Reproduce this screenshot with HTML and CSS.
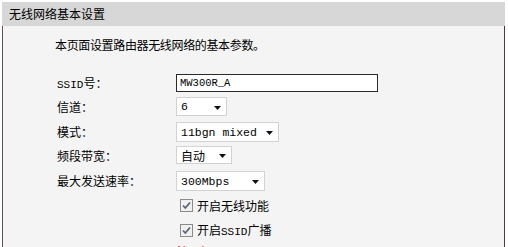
FILE: index.html
```html
<!DOCTYPE html>
<html lang="zh-CN">
<head>
  <meta charset="UTF-8">
  <title>无线网络基本设置</title>
  <link rel="stylesheet" href="styles.css">
</head>
<body>

  <!-- Wireless basic settings panel -->
  <div class="panel">
    <div class="panel-title">无线网络基本设置</div>
    <div class="panel-body">
      <p class="intro">本页面设置路由器无线网络的基本参数。</p>

      <div class="form">
        <div class="row row-ssid">
          <span class="label label-input"><span class="latin">SSID</span>号：</span>
          <input class="text" type="text" value="MW300R_A">
        </div>
        <div class="row row-channel">
          <span class="label">信道：</span>
          <div class="select sel-channel"><span>6</span><svg class="arrow" width="7" height="4" viewBox="0 0 7 4"><path d="M0 0H7L3.5 4Z" fill="#111"/></svg></div>
        </div>
        <div class="row row-mode">
          <span class="label">模式：</span>
          <div class="select sel-mode"><span>11bgn mixed</span><svg class="arrow" width="7" height="4" viewBox="0 0 7 4"><path d="M0 0H7L3.5 4Z" fill="#111"/></svg></div>
        </div>
        <div class="row row-band">
          <span class="label">频段带宽：</span>
          <div class="select sel-band"><span class="cjk">自动</span><svg class="arrow" width="7" height="4" viewBox="0 0 7 4"><path d="M0 0H7L3.5 4Z" fill="#111"/></svg></div>
        </div>
        <div class="row row-rate">
          <span class="label">最大发送速率：</span>
          <div class="select sel-rate"><span>300Mbps</span><svg class="arrow" width="7" height="4" viewBox="0 0 7 4"><path d="M0 0H7L3.5 4Z" fill="#111"/></svg></div>
        </div>

        <label class="row check-row">
          <svg class="check" width="13" height="13" viewBox="0 0 13 13"><rect x="0.5" y="0.5" width="12" height="12" fill="#f0f0f0" stroke="#8a8a8a"/><path d="M3 6.5L5.3 9L10 3.5" fill="none" stroke="#5a6478" stroke-width="1.8"/></svg>
          <span>开启无线功能</span>
        </label>
        <label class="row check-row check-last">
          <svg class="check" width="13" height="13" viewBox="0 0 13 13"><rect x="0.5" y="0.5" width="12" height="12" fill="#f0f0f0" stroke="#8a8a8a"/><path d="M3 6.5L5.3 9L10 3.5" fill="none" stroke="#5a6478" stroke-width="1.8"/></svg>
          <span>开启<span class="latin">SSID</span>广播</span>
        </label>

        <p class="note">注意</p>
      </div>
    </div>
  </div>

</body>
</html>
```

FILE: styles.css
```css
* {
  box-sizing: border-box;
}

body {
  margin: 0;
  height: 247px;
  overflow: hidden;
  background: #fff;
  color: #000;
  font-family: "Noto Sans CJK SC", sans-serif;
  font-size: 12px;
}

/* Panel */
.panel {
  margin: 2px 0 0 2px;
  width: 503px;
}

.panel-title {
  height: 24px;
  line-height: 24px;
  padding-left: 7px;
  background: #d7d7d7;
}

.panel-body {
  height: 240px;
  padding: 11px 0 0 52px;
  background: #f4f4f4;
  border-left: 1px solid #6e4c4c;
  border-right: 1px solid #4e3a3a;
}

.intro {
  margin: 0;
  line-height: 16px;
  letter-spacing: -0.35px;
}

/* Form */
.form {
  margin-top: 21px;
  padding-left: 2px;
}

.row {
  display: flex;
  align-items: flex-start;
}

.row-ssid { height: 23px; }
.row-channel { height: 25px; }
.row-mode { height: 24px; }
.row-band { height: 25px; }
.row-rate { height: 28px; }

.label {
  width: 119px;
  line-height: 20px;
}

.label-input {
  line-height: 18px;
}

.latin {
  font-family: "Liberation Mono", monospace;
  font-size: 11px;
}

.text {
  width: 202px;
  height: 18px;
  margin: 0;
  padding: 0 3px;
  border: 1px solid #2a2a2a;
  background: #fff;
  font-family: "Liberation Mono", monospace;
  font-size: 10.5px;
  color: #000;
  outline: none;
}

.select {
  display: flex;
  align-items: center;
  justify-content: space-between;
  height: 20px;
  padding: 0 5px 0 4px;
  border: 1px solid #d2d2d2;
  background: #fff;
  font-family: "Liberation Mono", "Noto Sans CJK SC", monospace;
  font-size: 11.5px;
}

.select .cjk {
  font-family: "Noto Sans CJK SC", sans-serif;
  font-size: 12px;
}

.arrow {
  margin-top: 2px;
}

.sel-channel { width: 51px; height: 19px; }
.sel-mode { width: 103px; }
.sel-band { width: 56px; height: 18px; }
.sel-rate { width: 89px; }

/* Checkboxes */
.check-row {
  height: 13px;
  margin-bottom: 12px;
  align-items: center;
  padding-left: 123px;
  line-height: 13px;
}

.check-last {
  margin-bottom: 8px;
}

.check {
  margin-right: 4px;
  flex-shrink: 0;
}

.note {
  margin: 0 0 0 120px;
  line-height: 14px;
  letter-spacing: 8px;
  color: #e00000;
}
```
